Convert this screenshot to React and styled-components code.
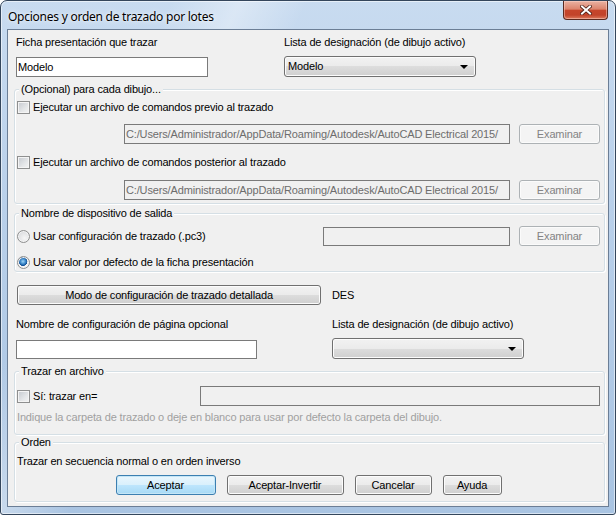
import styled, { createGlobalStyle, css } from 'styled-components'

const PATH = 'C:/Users/Administrador/AppData/Roaming/Autodesk/AutoCAD Electrical 2015/'

const App = () => {
  return (
    <>
      <GlobalStyle />
      <Window>
        <TitleBar>
          <Title>Opciones y orden de trazado por lotes</Title>
          <CloseButton>
            <svg width="12" height="10" viewBox="0 0 12 10">
              <path d="M2 1.5 L10 8.5 M10 1.5 L2 8.5" stroke="#4a1d14" strokeWidth="3.6" strokeLinecap="square" fill="none" />
              <path d="M2 1.5 L10 8.5 M10 1.5 L2 8.5" stroke="#fff" strokeWidth="2" strokeLinecap="square" fill="none" />
            </svg>
          </CloseButton>
        </TitleBar>
        <Client>
          <PairGrid $mt={6} $col={268}>
            <Label>Ficha presentación que trazar</Label>
            <Label>Lista de designación (de dibujo activo)</Label>
            <TextBox $width={192} $height={20} $mt={1}>Modelo</TextBox>
            <Combo $width={192}>
              Modelo
              <Arrow />
            </Combo>
          </PairGrid>

          <Group $mt={6} $pt={5} $pb={3}>
            <Legend>(Opcional) para cada dibujo...</Legend>
            <OptionRow>
              <CheckBox />
              <span>Ejecutar un archivo de comandos previo al trazado</span>
            </OptionRow>
            <PathRow $mt={10}>
              <TextBox $width={386} $height={20} $disabled>{PATH}</TextBox>
              <Button $width={81} disabled>Examinar</Button>
            </PathRow>
            <OptionRow $mt={12}>
              <CheckBox />
              <span>Ejecutar un archivo de comandos posterior al trazado</span>
            </OptionRow>
            <PathRow $mt={11}>
              <TextBox $width={386} $height={20} $disabled>{PATH}</TextBox>
              <Button $width={81} disabled>Examinar</Button>
            </PathRow>
          </Group>

          <Group $mt={3} $pt={6} $pb={2}>
            <Legend>Nombre de dispositivo de salida</Legend>
            <DeviceRow>
              <OptionRow as="div">
                <Radio />
                <span>Usar configuración de trazado (.pc3)</span>
              </OptionRow>
              <PathRow>
                <TextBox $width={187} $height={19} $disabled />
                <Button $width={81} disabled>Examinar</Button>
              </PathRow>
            </DeviceRow>
            <OptionRow $mt={10}>
              <Radio $checked />
              <span>Usar valor por defecto de la ficha presentación</span>
            </OptionRow>
          </Group>

          <ModeRow>
            <Button $width={304}>Modo de configuración de trazado detallada</Button>
            <span>DES</span>
          </ModeRow>

          <PairGrid $mt={13} $col={316}>
            <Label>Nombre de configuración de página opcional</Label>
            <Label>Lista de designación (de dibujo activo)</Label>
            <TextBox $width={241} $height={19} $mt={2} />
            <Combo $width={192}>
              <Arrow />
            </Combo>
          </PairGrid>

          <Group $mt={6} $pt={8} $pb={10}>
            <Legend>Trazar en archivo</Legend>
            <FileRow>
              <OptionRow as="div">
                <CheckBox />
                <span>Sí: trazar en=</span>
              </OptionRow>
              <TextBox $width={400} $height={20} $disabled />
            </FileRow>
            <Hint>Indique la carpeta de trazado o deje en blanco para usar por defecto la carpeta del dibujo.</Hint>
          </Group>

          <Group $mt={1} $pt={6} $pb={6}>
            <Legend>Orden</Legend>
            <Text>Trazar en secuencia normal o en orden inverso</Text>
            <ButtonBar>
              <Button $width={100} $primary>Aceptar</Button>
              <Button $width={117}>Aceptar-Invertir</Button>
              <Button $width={77}>Cancelar</Button>
              <Button $width={59}>Ayuda</Button>
            </ButtonBar>
          </Group>
        </Client>
      </Window>
    </>
  )
}

const GlobalStyle = createGlobalStyle`
  html, body {
    margin: 0;
    padding: 0;
    background: #ffffff;
  }
  body {
    font-family: "Liberation Sans", Arial, sans-serif;
    font-size: 11px;
    line-height: 13px;
    letter-spacing: -0.15px;
    color: #000;
  }
`

const Window = styled.div`
  box-sizing: border-box;
  width: 616px;
  height: 515px;
  display: flex;
  flex-direction: column;
  padding: 0 6px 7px 6px;
  border: 1px solid #34465c;
  border-radius: 7px 7px 3px 3px;
  background:
    linear-gradient(115deg, rgba(255,255,255,0) 20%, rgba(255,255,255,0.35) 28%, rgba(255,255,255,0) 36%),
    linear-gradient(180deg, #c8dbf0 0%, #b9d0ea 40%, #a9c4e2 100%);
  box-shadow: inset 0 0 0 1px rgba(255,255,255,0.55);
`

const TitleBar = styled.div`
  height: 28px;
  display: flex;
  align-items: flex-start;
  justify-content: space-between;
  padding-left: 1px;
`

const Title = styled.div`
  font-family: "Noto Sans", "Open Sans", sans-serif;
  font-size: 12px;
  line-height: 16px;
  margin-top: 8px;
  letter-spacing: -0.25px;
  color: #000;
  text-shadow: 0 0 6px rgba(255,255,255,0.9), 0 0 2px rgba(255,255,255,0.8);
`

const CloseButton = styled.div`
  box-sizing: border-box;
  width: 45px;
  height: 19px;
  margin-right: 1px;
  display: flex;
  align-items: center;
  justify-content: center;
  border: 1px solid #5a2a20;
  border-top: none;
  border-radius: 0 0 4px 4px;
  background: linear-gradient(180deg, #eab2a2 0%, #dc846d 45%, #c6452b 52%, #c2432a 78%, #dd7a5d 100%);
  box-shadow: inset 0 0 0 1px rgba(255,220,210,0.45);
`

const Client = styled.div`
  flex: none;
  height: 476px;
  padding: 0 3px 0 6px;
  background: #f0f0f0;
  border: 1px solid #6b7e96;
`

const PairGrid = styled.div`
  display: grid;
  grid-template-columns: ${(p) => p.$col}px 1fr;
  row-gap: 7px;
  align-items: start;
  margin-top: ${(p) => p.$mt}px;
  padding-left: 2px;
`

const Label = styled.div`
  line-height: 13px;
  white-space: nowrap;
`

const TextBox = styled.div`
  box-sizing: border-box;
  width: ${(p) => p.$width}px;
  height: ${(p) => p.$height}px;
  margin-top: ${(p) => p.$mt || 0}px;
  padding: 0 1px;
  display: flex;
  align-items: center;
  overflow: hidden;
  white-space: nowrap;
  border: 1px solid #7a7a7a;
  background: ${(p) => (p.$disabled ? '#f0f0f0' : '#ffffff')};
  color: ${(p) => (p.$disabled ? '#6d6d6d' : '#000')};
`

const Combo = styled.div`
  box-sizing: border-box;
  width: ${(p) => p.$width}px;
  height: 21px;
  padding: 0 3px;
  display: flex;
  align-items: center;
  justify-content: space-between;
  border: 1px solid #707070;
  border-radius: 3px;
  background: linear-gradient(180deg, #f2f2f2 0%, #ebebeb 50%, #dddddd 50%, #cfcfcf 100%);
  box-shadow: inset 0 0 0 1px #fcfcfc;
`

const Arrow = styled.span`
  width: 0;
  height: 0;
  margin-left: auto;
  margin-right: 4px;
  border-left: 4px solid transparent;
  border-right: 4px solid transparent;
  border-top: 4px solid #000;
`

const Group = styled.fieldset`
  min-width: 0;
  margin: ${(p) => p.$mt}px 0 0 0;
  padding: ${(p) => p.$pt}px 4px ${(p) => p.$pb}px 2px;
  border: 1px solid #d5dfe5;
  border-radius: 3px;
  box-shadow: inset 1px 1px 0 #ffffff, 1px 1px 0 #ffffff;
`

const Legend = styled.legend`
  margin-left: 2px;
  padding: 0 2px;
  line-height: 13px;
  background: #f0f0f0;
`

const OptionRow = styled.label`
  display: flex;
  align-items: center;
  gap: 3px;
  height: 13px;
  margin-top: ${(p) => p.$mt || 0}px;
  white-space: nowrap;
`

const CheckBox = styled.span`
  box-sizing: border-box;
  flex: none;
  width: 13px;
  height: 13px;
  border: 1px solid #8e8f8f;
  background: linear-gradient(135deg, #c4c8ce 0%, #e4e6e8 60%, #f4f4f4 100%);
  box-shadow: inset 0 0 0 1px #f4f4f4;
`

const Radio = styled.span`
  box-sizing: border-box;
  flex: none;
  width: 13px;
  height: 13px;
  border-radius: 50%;
  border: 1px solid #8e8f8f;
  background: radial-gradient(circle at 60% 65%, #f6f6f6 0%, #e2e3e5 55%, #c8cbcf 100%);
  box-shadow: inset 0 0 0 1px #f4f4f4;
  ${(p) =>
    p.$checked &&
    css`
      background: radial-gradient(circle at 45% 40%, #9fd6f7 0%, #3b87c9 30%, #0f4d92 48%, #f4f4f4 52%, #e6e7e8 100%);
    `}
`

const PathRow = styled.div`
  display: flex;
  align-items: center;
  justify-content: flex-end;
  gap: 9px;
  height: 20px;
  margin-top: ${(p) => p.$mt || 0}px;
`

const DeviceRow = styled.div`
  display: flex;
  align-items: center;
  justify-content: space-between;
  height: 20px;
`

const FileRow = styled.div`
  display: flex;
  align-items: center;
  justify-content: space-between;
  height: 20px;
`

const Button = styled.button`
  box-sizing: border-box;
  width: ${(p) => p.$width}px;
  height: 20px;
  margin: 0;
  padding: 0;
  flex: none;
  font: inherit;
  letter-spacing: inherit;
  color: #000;
  border: 1px solid #707070;
  border-radius: 3px;
  background: linear-gradient(180deg, #f2f2f2 0%, #ebebeb 50%, #dddddd 50%, #cfcfcf 100%);
  box-shadow: inset 0 0 0 1px #fcfcfc;
  ${(p) =>
    p.$primary &&
    css`
      border-color: #3c7fb1;
      background: linear-gradient(180deg, #eaf6fd 0%, #d9f0fc 50%, #bee6fd 50%, #a7d9f5 100%);
      box-shadow: inset 0 0 0 1px #c4e6f7;
    `}
  &:disabled {
    color: #838383;
    border-color: #adb2b5;
    background: #f4f4f4;
    box-shadow: inset 0 0 0 1px #fbfbfb;
  }
`

const ModeRow = styled.div`
  display: flex;
  align-items: center;
  gap: 11px;
  margin-top: 13px;
  padding-left: 3px;
`

const Hint = styled.div`
  margin-top: 5px;
  line-height: 13px;
  color: #a0a0a0;
  white-space: nowrap;
`

const Text = styled.div`
  line-height: 13px;
  white-space: nowrap;
`

const ButtonBar = styled.div`
  display: flex;
  justify-content: center;
  gap: 11px;
  margin-top: 7px;
`

export default App
